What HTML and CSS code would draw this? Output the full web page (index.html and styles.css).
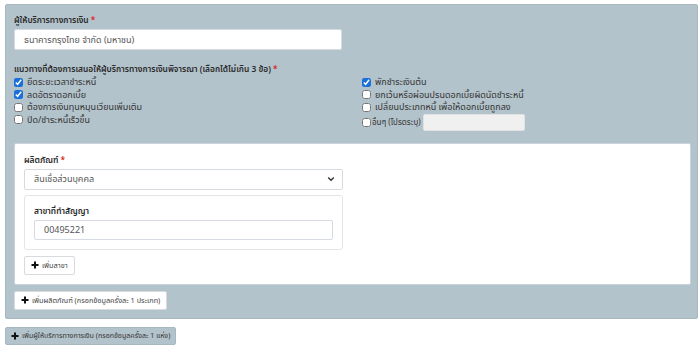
FILE: index.html
```html
<!DOCTYPE html>
<html lang="th">
<head>
<meta charset="utf-8">
<link rel="stylesheet" href="styles.css">
</head>
<body>
<div class="panel">
  <div class="field">
    <label class="lbl">ผู้ให้บริการทางการเงิน <span class="req">*</span></label>
    <input class="inp provider" type="text" value="ธนาคารกรุงไทย จำกัด (มหาชน)">
  </div>
  <div class="field options">
    <label class="lbl">แนวทางที่ต้องการเสนอให้ผู้บริการทางการเงินพิจารณา (เลือกได้ไม่เกิน 3 ข้อ) <span class="req">*</span></label>
    <div class="cols">
      <div class="col">
        <label class="chk"><input type="checkbox" checked> ยืดระยะเวลาชำระหนี้</label>
        <label class="chk"><input type="checkbox" checked> ลดอัตราดอกเบี้ย</label>
        <label class="chk"><input type="checkbox"> ต้องการเงินทุนหมุนเวียนเพิ่มเติม</label>
        <label class="chk"><input type="checkbox"> ปิด/ชำระหนี้เร็วขึ้น</label>
      </div>
      <div class="col">
        <label class="chk"><input type="checkbox" checked> พักชำระเงินต้น</label>
        <label class="chk"><input type="checkbox"> ยกเว้นหรือผ่อนปรนดอกเบี้ยผิดนัดชำระหนี้</label>
        <label class="chk"><input type="checkbox"> เปลี่ยนประเภทหนี้ เพื่อให้ดอกเบี้ยถูกลง</label>
        <label class="chk other"><input type="checkbox"><span class="small-txt">อื่นๆ (โปรดระบุ)</span><input class="inp other-inp" type="text"></label>
      </div>
    </div>
  </div>
  <div class="card">
    <label class="lbl">ผลิตภัณฑ์ <span class="req">*</span></label>
    <div class="select">
      <span>สินเชื่อส่วนบุคคล</span>
      <svg width="8" height="6" viewBox="0 0 8 6"><path d="M1.2 1.5 L4 4.3 L6.8 1.5" fill="none" stroke="#333" stroke-width="1.4"/></svg>
    </div>
    <div class="branch">
      <label class="lbl">สาขาที่ทำสัญญา</label>
      <input class="inp branch-inp" type="text" value="00495221">
    </div>
    <button class="btn small"><svg class="plus" width="8" height="8" viewBox="0 0 8 8"><path d="M4 0.5V7.5M0.5 4H7.5" stroke="#111" stroke-width="2"/></svg>เพิ่มสาขา</button>
  </div>
  <button class="btn"><svg class="plus" width="8" height="8" viewBox="0 0 8 8"><path d="M4 0.5V7.5M0.5 4H7.5" stroke="#111" stroke-width="2"/></svg>เพิ่มผลิตภัณฑ์ (กรอกข้อมูลครั้งละ 1 ประเภท)</button>
</div>
<button class="btn gray"><svg class="plus" width="8" height="8" viewBox="0 0 8 8"><path d="M4 0.5V7.5M0.5 4H7.5" stroke="#111" stroke-width="2"/></svg>เพิ่มผู้ให้บริการทางการเงิน (กรอกข้อมูลครั้งละ 1 แห่ง)</button>
</body>
</html>
```
FILE: styles.css
```css
* { box-sizing: border-box; }
body {
  margin: 0;
  padding: 4px 2px 0 5px;
  font-family: "Noto Sans", "Noto Sans Thai", sans-serif;
  font-size: 9px;
  color: #333;
  background: #fff;
}
.panel {
  background: #b3c3cb;
  border: 1px solid #a7b8c1;
  border-radius: 2px;
  padding: 9px 8px 8px 8px;
  width: 693px;
}
.lbl {
  display: block;
  font-weight: 600;
  color: #2b2b2b;
  font-size: 8.4px;
  line-height: 12px;
  margin-bottom: 3px;
}
.req { color: #e02020; }
.inp {
  display: block;
  border: 1px solid #d5dbe0;
  border-radius: 2px;
  background: #fff;
  font-family: inherit;
  font-size: 9px;
  color: #555;
  padding: 0 9px;
  outline: none;
}
.provider { width: 328px; height: 21px; }
.options { margin-top: 13px; }
.options .lbl { margin-bottom: 1px; }
.cols { display: flex; }
.col { display: flex; flex-direction: column; }
.col:first-child { width: 348px; }
.chk {
  display: flex;
  align-items: center;
  height: 12.5px;
  color: #333;
  font-size: 9px;
}
.chk input[type=checkbox] {
  width: 9px; height: 9px;
  margin: 0 4px 0 0;
  accent-color: #1a6fd8;
}
.small-txt { font-size: 8px; }
.chk.other { height: 17px; margin-top: 0; }
.chk.other input[type=checkbox] { margin-right: 1px; }
.other-inp {
  width: 102px; height: 17px;
  margin-left: 2px;
  background: #f0f0f0;
  border-color: #e2e2e2;
}
.card {
  background: #fff;
  border: 1px solid #c9d3d9;
  border-radius: 2px;
  margin-top: 12px;
  padding: 10px 9px 9px 9px;
  width: 677px;
}
.select {
  width: 319px; height: 21px;
  border: 1px solid #d5dbe0;
  border-radius: 2px;
  display: flex; align-items: center; justify-content: space-between;
  padding: 0 7px 0 9px;
  color: #555;
}
.branch {
  width: 319px;
  border: 1px solid #e3e6e9;
  border-radius: 3px;
  margin-top: 5px;
  padding: 9px 9px 9px 9px;
}
.branch-inp { width: 299px; height: 20px; }
.btn {
  display: flex; align-items: center;
  background: #fff;
  border: 1px solid #d6dbdf;
  border-radius: 2px;
  font-family: inherit;
  font-size: 7.3px;
  color: #444;
  height: 19px;
  padding: 0 6px;
  cursor: pointer;
}
.btn.small { margin-top: 6px; }
.panel > .btn { margin-top: 6px; }
.plus { margin-right: 3px; flex: none; }
.btn.gray {
  margin-top: 8px;
  background: #b3c3cb;
  border-color: #a7b8c1;
  color: #333;
  height: 18px;
  padding: 0 5px;
  font-size: 7.1px;
}
```
